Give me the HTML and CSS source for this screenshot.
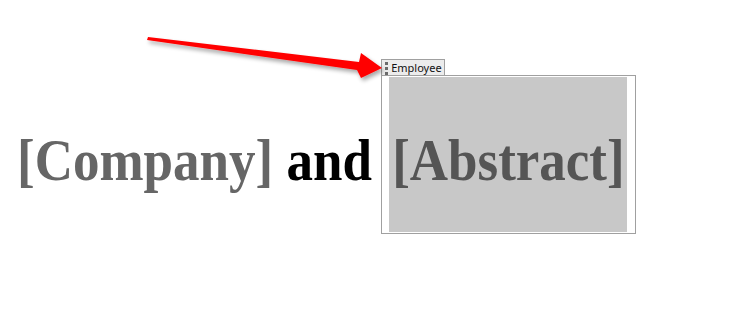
FILE: index.html
```html
<!DOCTYPE html>
<html>
<head>
<meta charset="utf-8">
<link rel="stylesheet" href="styles.css">
</head>
<body>
<div class="doc">
  <p class="line"><span class="tall ph">[Company]</span> <span class="tall and">and</span> <span class="cc"><span class="cc-tab"><span class="grip"><i></i><i></i><i></i></span>Employee</span><span class="cc-body"><span class="tall">[Abstract]</span></span></span></p>
  <svg class="arrow" width="750" height="323" viewBox="0 0 750 323">
    <defs>
      <filter id="sh" x="-10%" y="-50%" width="130%" height="300%">
        <feGaussianBlur in="SourceAlpha" stdDeviation="2"/>
        <feOffset dx="2" dy="3"/>
        <feComponentTransfer><feFuncA type="linear" slope="0.35"/></feComponentTransfer>
        <feMerge><feMergeNode/><feMergeNode in="SourceGraphic"/></feMerge>
      </filter>
    </defs>
    <polygon filter="url(#sh)" fill="#ff0000" points="148,37 359,62 361,53 382,68 361,78 357,70 147,40"/>
  </svg>
</div>
</body>
</html>
```
FILE: styles.css
```css
html, body {
  margin: 0;
  padding: 0;
  background: #ffffff;
}
.doc {
  position: relative;
  width: 750px;
  height: 323px;
  overflow: hidden;
}
.line {
  margin: 0;
  padding: 75px 0 0 17px;
  font-family: "Liberation Serif", "Times New Roman", serif;
  font-weight: bold;
  font-size: 53px;
  line-height: 59px;
  white-space: nowrap;
}
.tall {
  display: inline-block;
  transform: scaleY(1.12);
  transform-origin: 50% 47px;
}
.ph {
  color: #666666;
}
.and {
  color: #000000;
}
.cc {
  position: relative;
  display: inline-block;
  border: 1px solid #a0a0a0;
  padding: 1px 8px 1px 7px;
  margin-left: -4px;
}
.cc-tab {
  position: absolute;
  top: -17px;
  left: -1px;
  height: 15px;
  width: 59px;
  border: 1px solid #a0a0a0;
  border-bottom: none;
  background: #ececec;
  font-family: "Noto Sans", "DejaVu Sans", sans-serif;
  font-weight: normal;
  font-size: 11px;
  line-height: 15px;
  color: #111111;
  display: flex;
  align-items: center;
  gap: 3px;
  padding-left: 3px;
  box-sizing: content-box;
}
.grip {
  display: flex;
  flex-direction: column;
  gap: 2px;
  margin-top: 1px;
}
.grip i {
  display: block;
  width: 3px;
  height: 3px;
  background: #6a6a6a;
}
.cc-body {
  display: inline-block;
  background: #c8c8c8;
  color: #555555;
  width: 235px;
  padding: 56px 0 40px 3px;
  overflow: visible;
}
.arrow {
  position: absolute;
  left: 0;
  top: 0;
}
```
